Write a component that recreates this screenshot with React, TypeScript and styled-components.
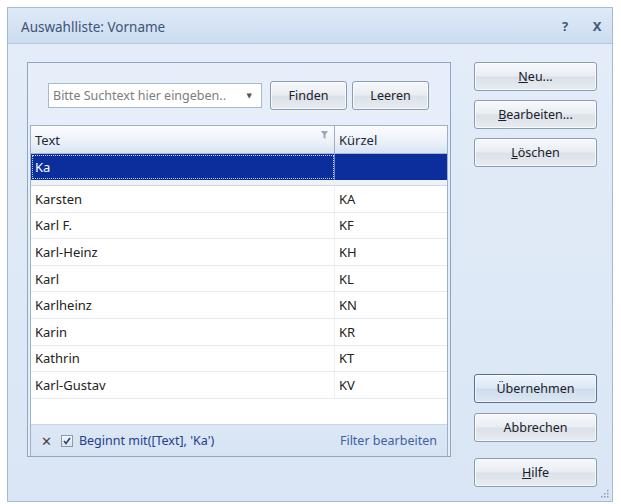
import React from "react";
import styled, { createGlobalStyle, css } from "styled-components";

const GlobalStyle = createGlobalStyle`
  html, body {
    margin: 0;
    padding: 0;
    background: #ffffff;
  }
  body {
    font-family: "Noto Sans", "DejaVu Sans", sans-serif;
    font-size: 13px;
    color: #1e1e1e;
  }
`;

const Page = styled.div`
  width: 621px;
  height: 504px;
  padding: 7px 0 0 7px;
  box-sizing: border-box;
`;

const Window = styled.div`
  width: 606px;
  height: 495px;
  box-sizing: border-box;
  border: 1px solid #a7bad3;
  background: #dde8f6;
  display: flex;
  flex-direction: column;
  position: relative;
`;

const TitleBar = styled.div`
  height: 35px;
  flex: none;
  display: flex;
  align-items: center;
  padding: 0 4px 0 13px;
  background: linear-gradient(#dfeaf8, #cbdcf1);
  border-bottom: 1px solid #b3c6df;
`;

const Title = styled.div`
  flex: 1;
  font-size: 13.5px;
  color: #3d5474;
  padding-top: 2px;
`;

const TitleIcon = styled.span`
  width: 22px;
  text-align: center;
  font-size: 13px;
  font-weight: 700;
  color: #42597a;
  margin-left: 10px;
`;

const Body = styled.div`
  flex: 1;
  display: flex;
  padding: 18px 15px 0 19px;
  background: linear-gradient(#e3ecf8, #dae6f5);
`;

const Panel = styled.div`
  width: 424px;
  height: 395px;
  box-sizing: border-box;
  border: 1px solid #8fa5c2;
  background: #e5eef9;
  display: flex;
  flex-direction: column;
`;

const SearchRow = styled.div`
  display: flex;
  align-items: center;
  padding: 19px 0 0 20px;
  height: 26px;
  box-sizing: content-box;
`;

const SearchBox = styled.div`
  width: 214px;
  height: 25px;
  box-sizing: border-box;
  border: 1px solid #a9b8cb;
  background: #ffffff;
  display: flex;
  align-items: center;
  padding: 0 9px 0 4px;
  color: #7d7d7d;
  font-size: 12.5px;
  margin-right: 8px;
`;

const Placeholder = styled.span`
  flex: 1;
  white-space: nowrap;
`;

const Caret = styled.span`
  font-size: 7px;
  color: #555;
`;

const Button = styled.button<{ $w?: number; $default?: boolean }>`
  width: ${(p) => (p.$w ? `${p.$w}px` : "123px")};
  height: 29px;
  box-sizing: border-box;
  border: 1px solid #8b9bb2;
  border-radius: 3px;
  font-family: "Noto Sans", "DejaVu Sans", sans-serif;
  font-size: 12.5px;
  color: #1a2029;
  padding: 0;
  background: linear-gradient(#f6f8fb 0%, #e9edf2 48%, #dbe1e9 52%, #e8ecf1 100%);
  box-shadow: inset 0 0 0 1px rgba(255, 255, 255, 0.7);
  ${(p) =>
    p.$default &&
    css`
      border-color: #51709c;
      background: linear-gradient(#eef4fb 0%, #dde8f5 48%, #cfdcec 52%, #dde7f3 100%);
    `}
`;

const Mn = styled.span`
  text-decoration: underline;
`;

const Grid = styled.div`
  margin: 17px 2px 0 2px;
  flex: 1;
  display: flex;
  flex-direction: column;
  border: 1px solid #9fb0c6;
  border-bottom: none;
  background: #ffffff;
`;

const Row = styled.div`
  display: grid;
  grid-template-columns: 304px 1fr;
`;

const HeaderRow = styled(Row)`
  height: 27px;
  background: linear-gradient(#fbfcfe 0%, #edf2f9 55%, #d8e4f2 100%);
  border-bottom: 1px solid #a6b7cd;
`;

const HeadCell = styled.div<{ $last?: boolean }>`
  display: flex;
  align-items: center;
  padding-left: 4px;
  color: #1e2a3a;
  position: relative;
  border-right: ${(p) => (p.$last ? "none" : "1px solid #9fb0c6")};
`;

const Funnel = styled.svg`
  position: absolute;
  right: 6px;
  top: 5px;
`;

const FilterRow = styled(Row)`
  height: 26px;
  background: #0c2d9c;
  color: #ffffff;
`;

const FilterCell = styled.div<{ $focus?: boolean }>`
  display: flex;
  align-items: center;
  padding-left: 4px;
  ${(p) =>
    p.$focus &&
    css`
      outline: 1px dotted #c9d4ff;
      outline-offset: -2px;
    `}
  border-right: ${(p) => (p.$focus ? "1px solid #6f86c9" : "none")};
`;

const Separator = styled.div`
  height: 5px;
  background: #eef1f5;
  border-bottom: 1px solid #d3d9e1;
`;

const DataRow = styled(Row)`
  height: 26.6px;
  border-bottom: 1px solid #e6e9ed;
  box-sizing: border-box;
`;

const Cell = styled.div<{ $first?: boolean }>`
  display: flex;
  align-items: center;
  padding-left: 4px;
  font-size: 13px;
  color: #222;
  border-right: ${(p) => (p.$first ? "1px solid #eceef1" : "none")};
`;

const Filler = styled.div`
  flex: 1;
`;

const FooterBar = styled.div`
  height: 31px;
  display: flex;
  align-items: center;
  background: linear-gradient(#dde8f6, #d6e3f3);
  border-top: 1px solid #c8d5e6;
  padding: 0 10px 0 10px;
  font-size: 12.5px;
`;

const Close = styled.span`
  color: #444;
  font-size: 13px;
  margin-right: 9px;
`;

const Check = styled.span`
  width: 12px;
  height: 12px;
  box-sizing: border-box;
  border: 1px solid #8c9aaa;
  background: linear-gradient(#f4f6f8, #dfe4ea);
  display: inline-flex;
  align-items: center;
  justify-content: center;
  margin-right: 6px;
`;

const FilterText = styled.span`
  color: #23408c;
  flex: 1;
`;

const EditLink = styled.span`
  color: #40609e;
`;

const Side = styled.div`
  width: 123px;
  margin-left: 23px;
  display: flex;
  flex-direction: column;
  padding-bottom: 14px;
`;

const ButtonGroup = styled.div<{ $gap: number }>`
  display: flex;
  flex-direction: column;
  gap: ${(p) => p.$gap}px;
`;

const Spacer = styled.div`
  flex: 1;
`;

const Grip = styled.svg`
  position: absolute;
  right: 2px;
  bottom: 2px;
`;

const rows = [
  ["Karsten", "KA"],
  ["Karl F.", "KF"],
  ["Karl-Heinz", "KH"],
  ["Karl", "KL"],
  ["Karlheinz", "KN"],
  ["Karin", "KR"],
  ["Kathrin", "KT"],
  ["Karl-Gustav", "KV"],
];

export default function App() {
  return (
    <>
      <GlobalStyle />
      <Page>
        <Window>
          <TitleBar>
            <Title>Auswahlliste: Vorname</Title>
            <TitleIcon>?</TitleIcon>
            <TitleIcon>X</TitleIcon>
          </TitleBar>
          <Body>
            <Panel>
              <SearchRow>
                <SearchBox>
                  <Placeholder>Bitte Suchtext hier eingeben..</Placeholder>
                  <Caret>▼</Caret>
                </SearchBox>
                <Button $w={77}>Finden</Button>
                <Button $w={77} style={{ marginLeft: 5 }}>
                  Leeren
                </Button>
              </SearchRow>
              <Grid>
                <HeaderRow>
                  <HeadCell>
                    Text
                    <Funnel width="7" height="8" viewBox="0 0 7 8">
                      <path d="M0 0 H7 L4.5 3.5 V8 L2.5 6.5 V3.5 Z" fill="#9aa6b5" />
                    </Funnel>
                  </HeadCell>
                  <HeadCell $last>Kürzel</HeadCell>
                </HeaderRow>
                <FilterRow>
                  <FilterCell $focus>Ka</FilterCell>
                  <FilterCell />
                </FilterRow>
                <Separator />
                {rows.map(([name, code]) => (
                  <DataRow key={code}>
                    <Cell $first>{name}</Cell>
                    <Cell>{code}</Cell>
                  </DataRow>
                ))}
                <Filler />
                <FooterBar>
                  <Close>✕</Close>
                  <Check>
                    <svg width="8" height="8" viewBox="0 0 8 8">
                      <path d="M1 4 L3 6.5 L7 1" stroke="#2a3f80" strokeWidth="1.6" fill="none" />
                    </svg>
                  </Check>
                  <FilterText>Beginnt mit([Text], 'Ka')</FilterText>
                  <EditLink>Filter bearbeiten</EditLink>
                </FooterBar>
              </Grid>
            </Panel>
            <Side>
              <ButtonGroup $gap={9}>
                <Button>
                  <Mn>N</Mn>eu...
                </Button>
                <Button>
                  <Mn>B</Mn>earbeiten...
                </Button>
                <Button>
                  <Mn>L</Mn>öschen
                </Button>
              </ButtonGroup>
              <Spacer />
              <ButtonGroup $gap={10}>
                <Button $default>Übernehmen</Button>
                <Button>Abbrechen</Button>
                <Button style={{ marginTop: 6 }}>
                  <Mn>H</Mn>ilfe
                </Button>
              </ButtonGroup>
            </Side>
          </Body>
          <Grip width="10" height="10" viewBox="0 0 10 10">
            {[
              [8, 2],
              [8, 5],
              [5, 5],
              [8, 8],
              [5, 8],
              [2, 8],
            ].map(([x, y], i) => (
              <rect key={i} x={x - 1} y={y - 1} width="1.5" height="1.5" fill="#8d9cb0" />
            ))}
          </Grip>
        </Window>
      </Page>
    </>
  );
}
